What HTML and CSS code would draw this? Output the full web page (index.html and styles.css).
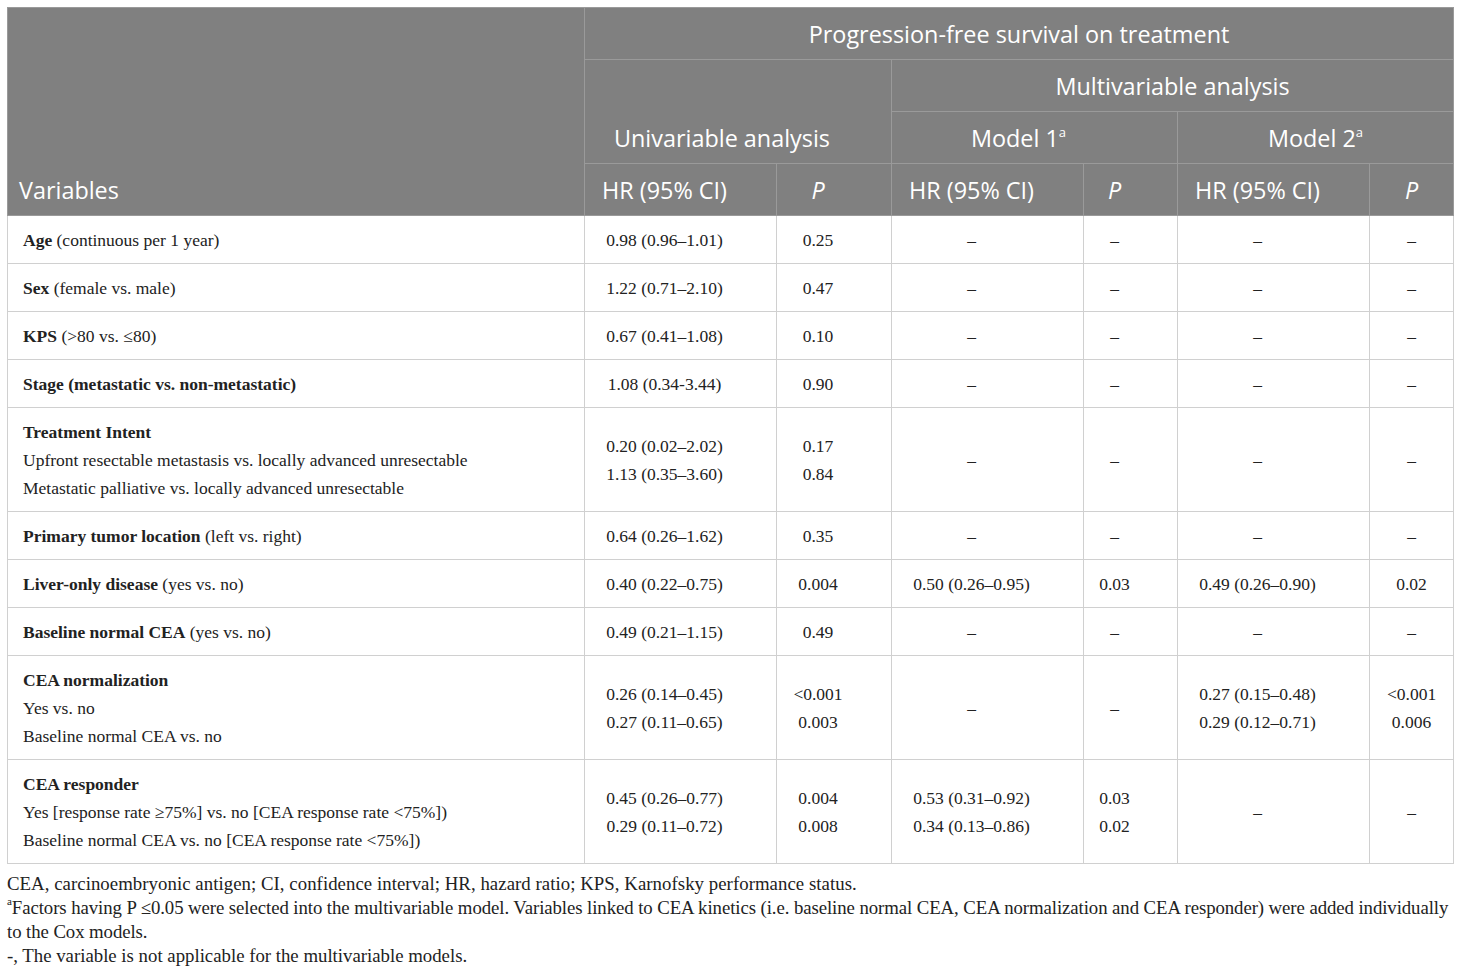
FILE: index.html
```html
<!DOCTYPE html>
<html lang="en">
<head>
<meta charset="utf-8">
<title>Progression-free survival on treatment</title>
<link rel="stylesheet" href="styles.css">
</head>
<body>
<div class="page">
<table class="tbl">
<colgroup>
<col class="c1"><col class="c2"><col class="c3"><col class="c4"><col class="c5"><col class="c6"><col class="c7">
</colgroup>
<thead>
<tr class="hrow">
<th rowspan="4" class="hvar">Variables</th>
<th colspan="6" class="hc">Progression-free survival on treatment</th>
</tr>
<tr class="hrow">
<th colspan="2" rowspan="2" class="hc hb off">Univariable analysis</th>
<th colspan="4" class="hc">Multivariable analysis</th>
</tr>
<tr class="hrow">
<th colspan="2" class="hc off">Model 1<sup>a</sup></th>
<th colspan="2" class="hc">Model 2<sup>a</sup></th>
</tr>
<tr class="hrow">
<th class="hs">HR (95% CI)</th>
<th class="hs"><i>P</i></th>
<th class="hs">HR (95% CI)</th>
<th class="hs"><i>P</i></th>
<th class="hs">HR (95% CI)</th>
<th class="hs last"><i>P</i></th>
</tr>
</thead>
<tbody>
<tr>
<td class="lbl"><b>Age</b> (continuous per 1 year)</td>
<td>0.98 (0.96–1.01)</td><td>0.25</td><td>–</td><td>–</td><td>–</td><td class="last">–</td>
</tr>
<tr>
<td class="lbl"><b>Sex</b> (female vs. male)</td>
<td>1.22 (0.71–2.10)</td><td>0.47</td><td>–</td><td>–</td><td>–</td><td class="last">–</td>
</tr>
<tr>
<td class="lbl"><b>KPS</b> (&gt;80 vs. ≤80)</td>
<td>0.67 (0.41–1.08)</td><td>0.10</td><td>–</td><td>–</td><td>–</td><td class="last">–</td>
</tr>
<tr>
<td class="lbl"><b>Stage (metastatic vs. non-metastatic)</b></td>
<td>1.08 (0.34-3.44)</td><td>0.90</td><td>–</td><td>–</td><td>–</td><td class="last">–</td>
</tr>
<tr class="tall">
<td class="lbl"><b>Treatment Intent</b><br>Upfront resectable metastasis vs. locally advanced unresectable<br>Metastatic palliative vs. locally advanced unresectable</td>
<td>0.20 (0.02–2.02)<br>1.13 (0.35–3.60)</td><td>0.17<br>0.84</td><td>–</td><td>–</td><td>–</td><td class="last">–</td>
</tr>
<tr>
<td class="lbl"><b>Primary tumor location</b> (left vs. right)</td>
<td>0.64 (0.26–1.62)</td><td>0.35</td><td>–</td><td>–</td><td>–</td><td class="last">–</td>
</tr>
<tr>
<td class="lbl"><b>Liver-only disease</b> (yes vs. no)</td>
<td>0.40 (0.22–0.75)</td><td>0.004</td><td>0.50 (0.26–0.95)</td><td>0.03</td><td>0.49 (0.26–0.90)</td><td class="last">0.02</td>
</tr>
<tr>
<td class="lbl"><b>Baseline normal CEA</b> (yes vs. no)</td>
<td>0.49 (0.21–1.15)</td><td>0.49</td><td>–</td><td>–</td><td>–</td><td class="last">–</td>
</tr>
<tr class="tall">
<td class="lbl"><b>CEA normalization</b><br>Yes vs. no<br>Baseline normal CEA vs. no</td>
<td>0.26 (0.14–0.45)<br>0.27 (0.11–0.65)</td><td>&lt;0.001<br>0.003</td><td>–</td><td>–</td><td>0.27 (0.15–0.48)<br>0.29 (0.12–0.71)</td><td class="last">&lt;0.001<br>0.006</td>
</tr>
<tr class="tall">
<td class="lbl"><b>CEA responder</b><br>Yes [response rate ≥75%] vs. no [CEA response rate &lt;75%])<br>Baseline normal CEA vs. no [CEA response rate &lt;75%])</td>
<td>0.45 (0.26–0.77)<br>0.29 (0.11–0.72)</td><td>0.004<br>0.008</td><td>0.53 (0.31–0.92)<br>0.34 (0.13–0.86)</td><td>0.03<br>0.02</td><td>–</td><td class="last">–</td>
</tr>
</tbody>
</table>
<div class="notes">
<p class="n1">CEA, carcinoembryonic antigen; CI, confidence interval; HR, hazard ratio; KPS, Karnofsky performance status.</p>
<p class="n2"><sup>a</sup>Factors having P ≤0.05 were selected into the multivariable model. Variables linked to CEA kinetics (i.e. baseline normal CEA, CEA normalization and CEA responder) were added individually to the Cox models.</p>
<p class="n3">-, The variable is not applicable for the multivariable models.</p>
</div>
</div>
</body>
</html>
```
FILE: styles.css
```css
html, body {
  margin: 0;
  padding: 0;
  background: #ffffff;
}

.page {
  padding: 7px 7px 0 7px;
  width: 1446px;
}

.tbl {
  border-collapse: collapse;
  table-layout: fixed;
  width: 1446px;
  font-family: "Liberation Serif", "Times New Roman", serif;
  font-size: 17.5px;
  color: #222222;
}

.c1 { width: 577px; }
.c2 { width: 192px; }
.c3 { width: 115px; }
.c4 { width: 192px; }
.c5 { width: 94px; }
.c6 { width: 192px; }
.c7 { width: 84px; }

.tbl th {
  background: #808080;
  color: #ffffff;
  font-family: "Open Sans", "Noto Sans", sans-serif;
  font-weight: 400;
  font-size: 23.4px;
  line-height: 30px;
  height: 52px;
  box-sizing: border-box;
  border: 1px solid #9a9a9a;
  padding: 0 8px;
}

.tbl th sup {
  font-size: 13px;
  line-height: 0;
  vertical-align: 10px;
}

.tbl th.hc {
  text-align: center;
  vertical-align: middle;
}

.tbl th.hc.off {
  padding: 0 32px 0 0;
}

.tbl th.hb {
  vertical-align: bottom;
}

.tbl th.hb.off {
  padding-bottom: 10px;
}

.tbl th.hvar {
  text-align: left;
  vertical-align: bottom;
  padding: 0 12px 10px 11px;
}

.tbl th.hs {
  text-align: center;
  padding: 0 32px 0 0;
}

.tbl th.hs.last {
  padding: 0;
}

.tbl td {
  border: 1px solid #d0d0d0;
  text-align: center;
  vertical-align: middle;
  line-height: 28px;
  padding: 9.5px 32px 9.5px 0;
  height: 48px;
  box-sizing: border-box;
}

.tbl tr.tall td {
  height: 104px;
}

.tbl td.last {
  padding: 9.5px 0;
}

.tbl td.lbl {
  text-align: left;
  padding: 9.5px 14px 9.5px 15px;
}

.tbl td b {
  font-weight: 700;
}

.notes {
  margin-top: 8px;
  width: 1453px;
  font-family: "Liberation Serif", "Times New Roman", serif;
  font-size: 18.8px;
  line-height: 24px;
  color: #222222;
}

.notes p {
  margin: 0;
}

.notes .n1 {
  letter-spacing: 0.05px;
}

.notes .n2 {
  letter-spacing: -0.08px;
}

.notes sup {
  font-size: 11px;
  line-height: 1;
  vertical-align: top;
}
```
